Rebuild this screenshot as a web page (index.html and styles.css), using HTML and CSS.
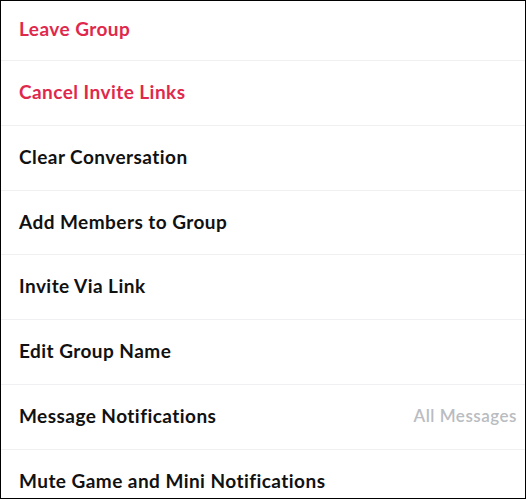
FILE: index.html
```html
<!DOCTYPE html>
<html>
<head>
<meta charset="utf-8">
<link rel="stylesheet" href="styles.css">
</head>
<body>
<div class="frame">
  <ul class="menu">
    <li class="item item-first danger"><span class="label">Leave Group</span></li>
    <li class="item danger"><span class="label">Cancel Invite Links</span></li>
    <li class="item"><span class="label">Clear Conversation</span></li>
    <li class="item"><span class="label">Add Members to Group</span></li>
    <li class="item"><span class="label">Invite Via Link</span></li>
    <li class="item"><span class="label">Edit Group Name</span></li>
    <li class="item"><span class="label">Message Notifications</span><span class="value">All Messages</span></li>
    <li class="item item-last"><span class="label">Mute Game and Mini Notifications</span></li>
  </ul>
</div>
</body>
</html>
```
FILE: styles.css
```css
html, body {
  margin: 0;
  padding: 0;
  background: #ffffff;
}
.frame {
  box-sizing: border-box;
  width: 526px;
  height: 499px;
  border: 1px solid #000000;
  overflow: hidden;
  background: #ffffff;
}
.menu {
  list-style: none;
  margin: 0;
  padding: 0;
}
.item {
  box-sizing: border-box;
  display: flex;
  align-items: center;
  justify-content: space-between;
  height: 64.83px;
  padding: 0 8px 3px 18px;
  border-bottom: 1px solid #f0f0f2;
  font-family: "Lato", "Noto Sans", sans-serif;
  font-weight: 700;
  font-size: 19px;
  letter-spacing: 0.45px;
  color: #111111;
}
.item-first {
  height: 60px;
  padding-bottom: 5px;
}
.item-last {
  border-bottom: none;
}
.danger {
  color: #e0284c;
}
.value {
  font-weight: 600;
  font-size: 17px;
  letter-spacing: 0.5px;
  color: #b9bcc1;
}
```
